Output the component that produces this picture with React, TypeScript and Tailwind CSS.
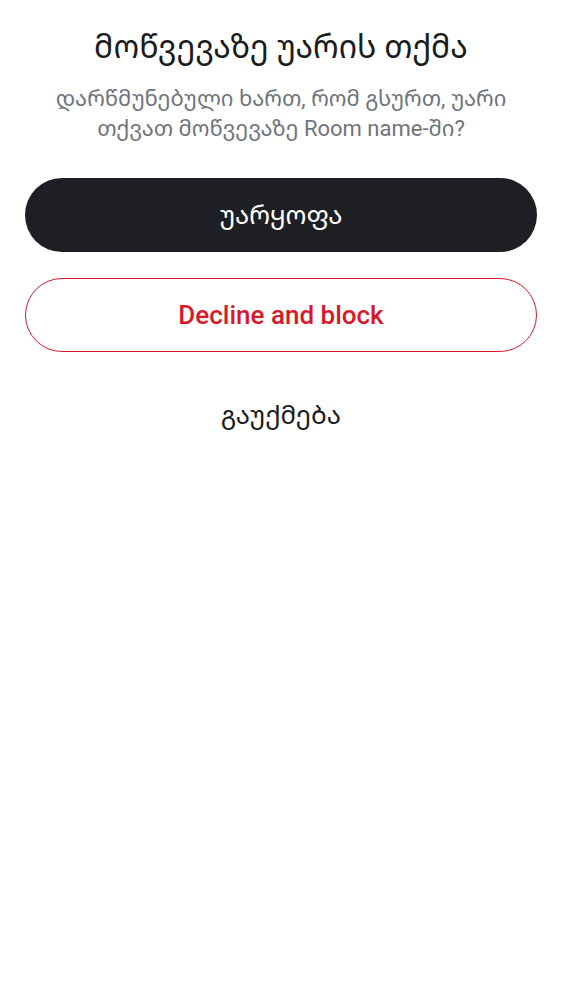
import React from "react";

const App = () => {
  return (
    <div className="min-h-screen bg-white px-[25px] pt-[26px] font-['Roboto','Noto_Sans_Georgian',sans-serif]">
      <h1 className="text-center text-[32px] leading-[42px] font-normal text-[#1b1c20]">
        მოწვევაზე უარის თქმა
      </h1>
      <p className="mt-[16px] px-[12px] text-center text-[22px] leading-[30px] text-[#6f747c]">
        დარწმუნებული ხართ, რომ გსურთ, უარი თქვათ მოწვევაზე Room name-ში?
      </p>

      <div className="mt-[34px] flex flex-col gap-[26px]">
        <button className="h-[74px] w-full rounded-full bg-[#1e1f24] text-[26px] text-white">
          უარყოფა
        </button>
        <button className="h-[74px] w-full rounded-full border border-[#d8192c] bg-white text-[26px] font-medium text-[#d8192c]">
          Decline and block
        </button>
        <button className="h-[74px] w-full rounded-full bg-white text-[26px] text-[#1b1c20]">
          გაუქმება
        </button>
      </div>
    </div>
  );
};

export default App;
